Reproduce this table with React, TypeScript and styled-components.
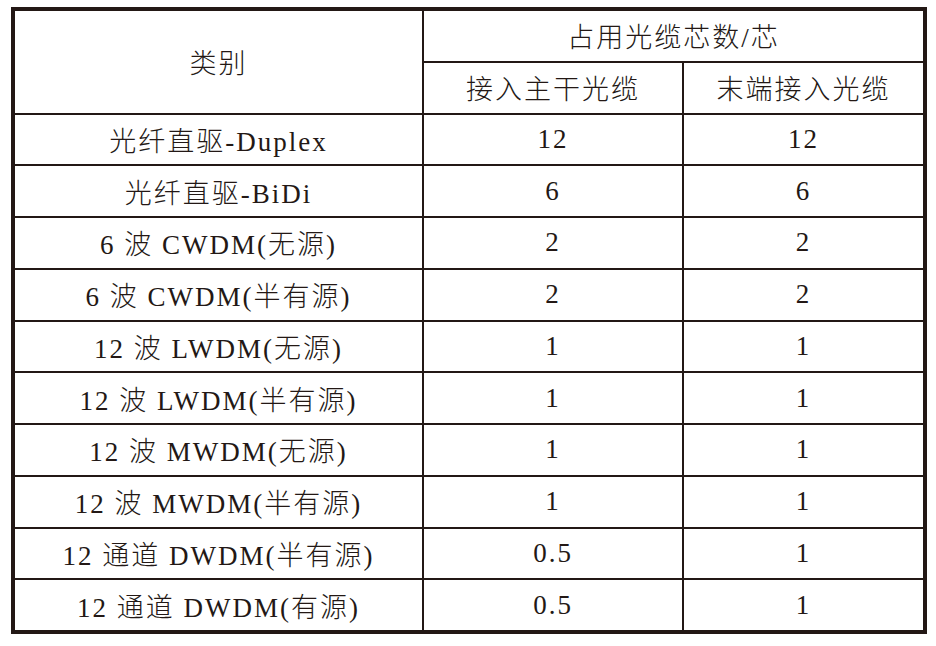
import React from "react";
import styled, { createGlobalStyle } from "styled-components";

const Global = createGlobalStyle`
  html, body { margin: 0; padding: 0; background: #ffffff; }
  body { font-family: "Liberation Serif", "Noto Sans CJK SC", serif; color: #231815; }
`;

const Page = styled.div`
  padding: 7px 0 0 11px;
`;

const Grid = styled.div`
  display: grid;
  width: 908px;
  grid-template-columns: 407px 258px 239px;
  grid-template-rows: repeat(12, 49.75px);
  gap: 2px;
  border: 4px solid #231815;
  background: #231815;
`;

const Cell = styled.div<{ $rows?: number; $cols?: number }>`
  background: #ffffff;
  display: flex;
  align-items: center;
  justify-content: center;
  font-size: 27px;
  font-weight: 300;
  letter-spacing: 2px;
  white-space: pre;
  grid-row: span ${(p) => p.$rows ?? 1};
  grid-column: span ${(p) => p.$cols ?? 1};
`;

const rows: [string, string, string][] = [
  ["光纤直驱-Duplex", "12", "12"],
  ["光纤直驱-BiDi", "6", "6"],
  ["6 波 CWDM(无源)", "2", "2"],
  ["6 波 CWDM(半有源)", "2", "2"],
  ["12 波 LWDM(无源)", "1", "1"],
  ["12 波 LWDM(半有源)", "1", "1"],
  ["12 波 MWDM(无源)", "1", "1"],
  ["12 波 MWDM(半有源)", "1", "1"],
  ["12 通道 DWDM(半有源)", "0.5", "1"],
  ["12 通道 DWDM(有源)", "0.5", "1"],
];

export default function App() {
  return (
    <Page>
      <Global />
      <Grid>
        <Cell $rows={2}>类别</Cell>
        <Cell $cols={2}>占用光缆芯数/芯</Cell>
        <Cell>接入主干光缆</Cell>
        <Cell>末端接入光缆</Cell>
        {rows.map((r, i) => (
          <React.Fragment key={i}>
            <Cell>{r[0]}</Cell>
            <Cell>{r[1]}</Cell>
            <Cell>{r[2]}</Cell>
          </React.Fragment>
        ))}
      </Grid>
    </Page>
  );
}
